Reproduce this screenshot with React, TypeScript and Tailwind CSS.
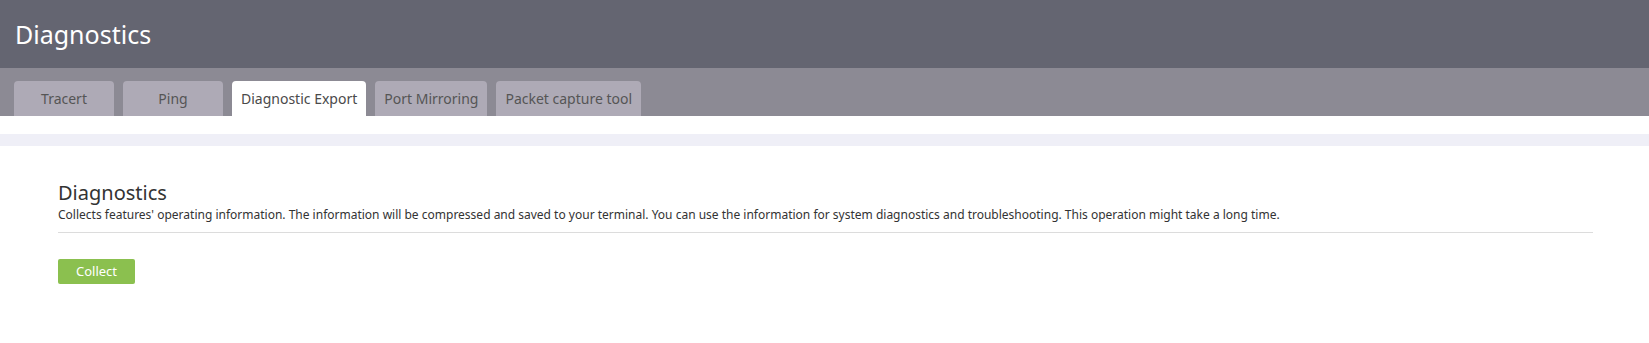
const TABS = [
  { label: 'Tracert', width: 'w-[100px]' },
  { label: 'Ping', width: 'w-[100px]' },
  { label: 'Diagnostic Export', width: 'px-[9px]', active: true },
  { label: 'Port Mirroring', width: 'px-[9px]' },
  { label: 'Packet capture tool', width: 'px-[9px]' },
];

export default function App() {
  return (
    <div className="min-h-screen bg-white font-['Noto_Sans','Open_Sans',sans-serif]">
      {/* title bar */}
      <div className="h-[68px] bg-[#646571] flex items-center pl-[15px]">
        <h1 className="text-[25px] text-white leading-none">Diagnostics</h1>
      </div>

      {/* tab strip */}
      <div className="h-[48px] bg-[#8c8a94] flex items-end gap-[9px] pl-[14px]">
        {TABS.map((tab) => (
          <div
            key={tab.label}
            className={`h-[35px] ${tab.width} rounded-t-[4px] flex items-center justify-center text-[14px] whitespace-nowrap ${
              tab.active ? 'bg-white text-[#4a4a4a]' : 'bg-[#aeaab6] text-[#555]'
            }`}
          >
            {tab.label}
          </div>
        ))}
      </div>

      <div className="h-[18px]" />
      <div className="h-[12px] bg-[#efeff7]" />

      <div className="pl-[58px] pr-[56px] pt-[34px]">
        <h2 className="text-[20px] leading-[26px] text-[#333]">Diagnostics</h2>
        <p className="text-[12px] leading-[17px] text-[#333]">
          Collects features' operating information. The information will be compressed and saved to your terminal. You can use the information for system diagnostics and troubleshooting. This operation might take a long time.
        </p>
        <div className="mt-[9px] border-t border-[#dcdcdc]" />
        <button className="mt-[26px] h-[25px] w-[77px] rounded-[2px] bg-[#8bc04f] text-white text-[13px]">
          Collect
        </button>
      </div>
    </div>
  );
}
